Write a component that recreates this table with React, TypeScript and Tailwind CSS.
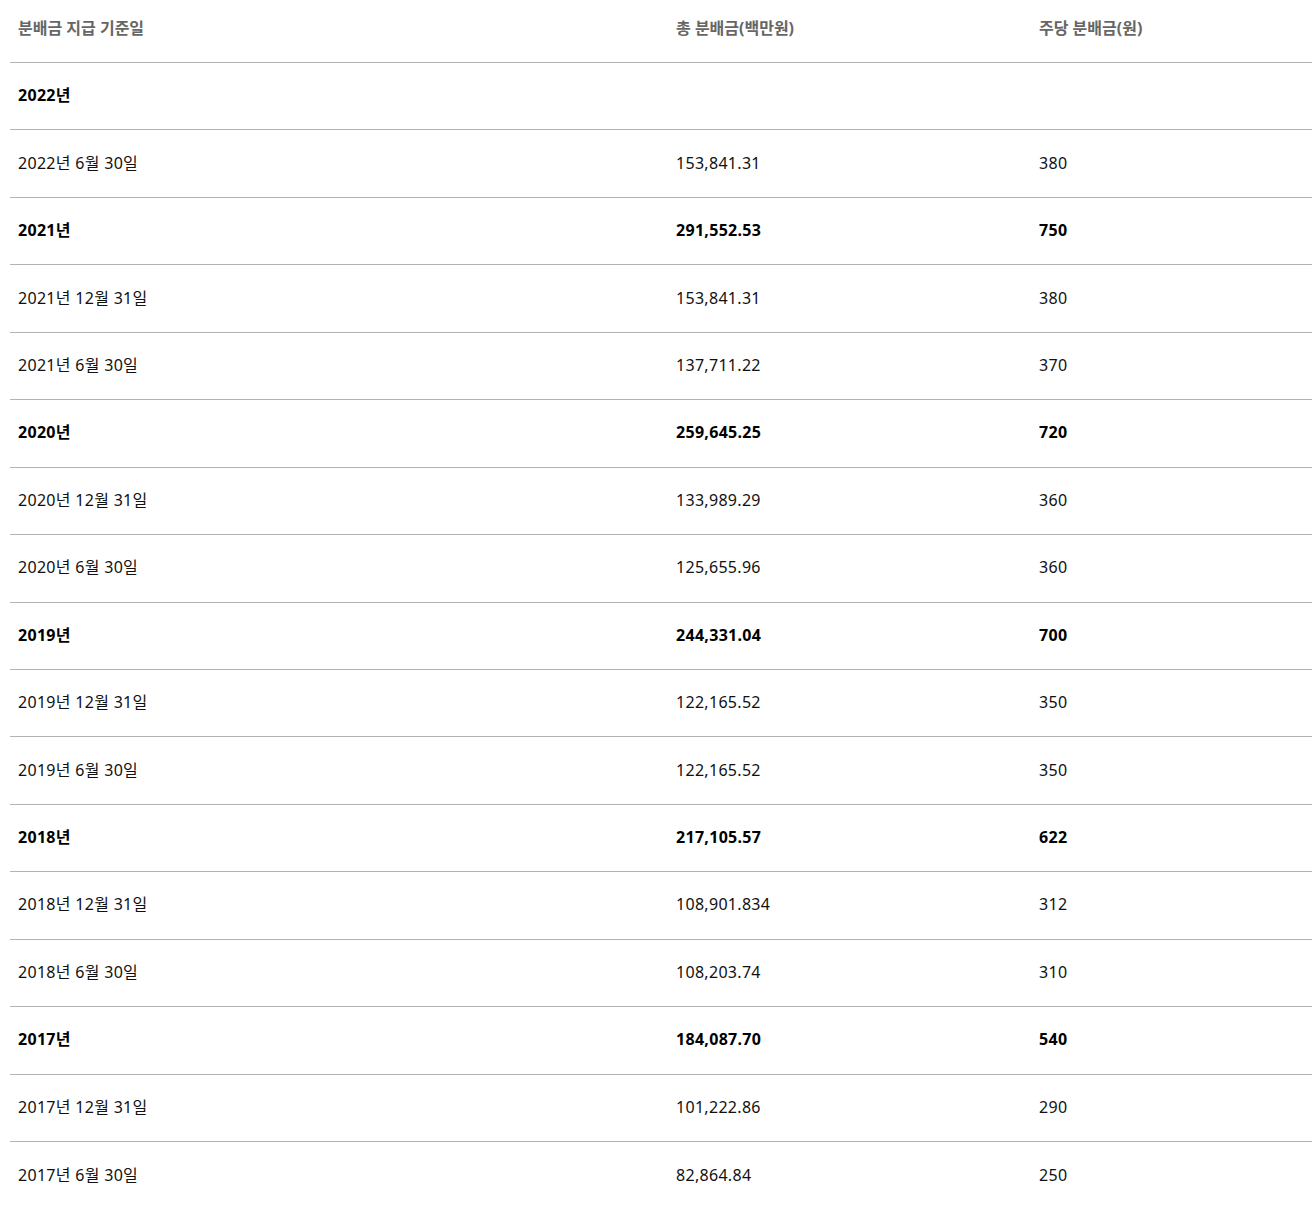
import React from "react";

type Row = { label: string; total: string; per: string; bold?: boolean };

const rows: Row[] = [
  { label: "2022년", total: "", per: "", bold: true },
  { label: "2022년 6월 30일", total: "153,841.31", per: "380" },
  { label: "2021년", total: "291,552.53", per: "750", bold: true },
  { label: "2021년 12월 31일", total: "153,841.31", per: "380" },
  { label: "2021년 6월 30일", total: "137,711.22", per: "370" },
  { label: "2020년", total: "259,645.25", per: "720", bold: true },
  { label: "2020년 12월 31일", total: "133,989.29", per: "360" },
  { label: "2020년 6월 30일", total: "125,655.96", per: "360" },
  { label: "2019년", total: "244,331.04", per: "700", bold: true },
  { label: "2019년 12월 31일", total: "122,165.52", per: "350" },
  { label: "2019년 6월 30일", total: "122,165.52", per: "350" },
  { label: "2018년", total: "217,105.57", per: "622", bold: true },
  { label: "2018년 12월 31일", total: "108,901.834", per: "312" },
  { label: "2018년 6월 30일", total: "108,203.74", per: "310" },
  { label: "2017년", total: "184,087.70", per: "540", bold: true },
  { label: "2017년 12월 31일", total: "101,222.86", per: "290" },
  { label: "2017년 6월 30일", total: "82,864.84", per: "250" },
];

export default function App() {
  return (
    <div
      className="bg-white w-[1312px] h-[1206px] overflow-hidden pl-[10px]"
      style={{ fontFamily: '"Noto Sans", "Noto Sans CJK KR", sans-serif' }}
    >
      <div className="grid grid-cols-[658px_363px_1fr] h-[63px] items-center pb-[6px] border-b border-[#b3b3b3] text-[16px] font-bold text-[#666]">
        <div className="pl-2">분배금 지급 기준일</div>
        <div className="pl-2">총 분배금(백만원)</div>
        <div className="pl-2">주당 분배금(원)</div>
      </div>
      {rows.map((r, i) => (
        <div
          key={i}
          className={
            "grid grid-cols-[658px_363px_1fr] h-[67.44px] items-center pb-[2px] text-[16px] tracking-[0.3px] " +
            (i < rows.length - 1 ? "border-b border-[#b3b3b3] " : "") +
            (r.bold ? "font-bold text-black" : "text-[#111]")
          }
        >
          <div className="pl-2">{r.label}</div>
          <div className="pl-2">{r.total}</div>
          <div className="pl-2">{r.per}</div>
        </div>
      ))}
    </div>
  );
}
